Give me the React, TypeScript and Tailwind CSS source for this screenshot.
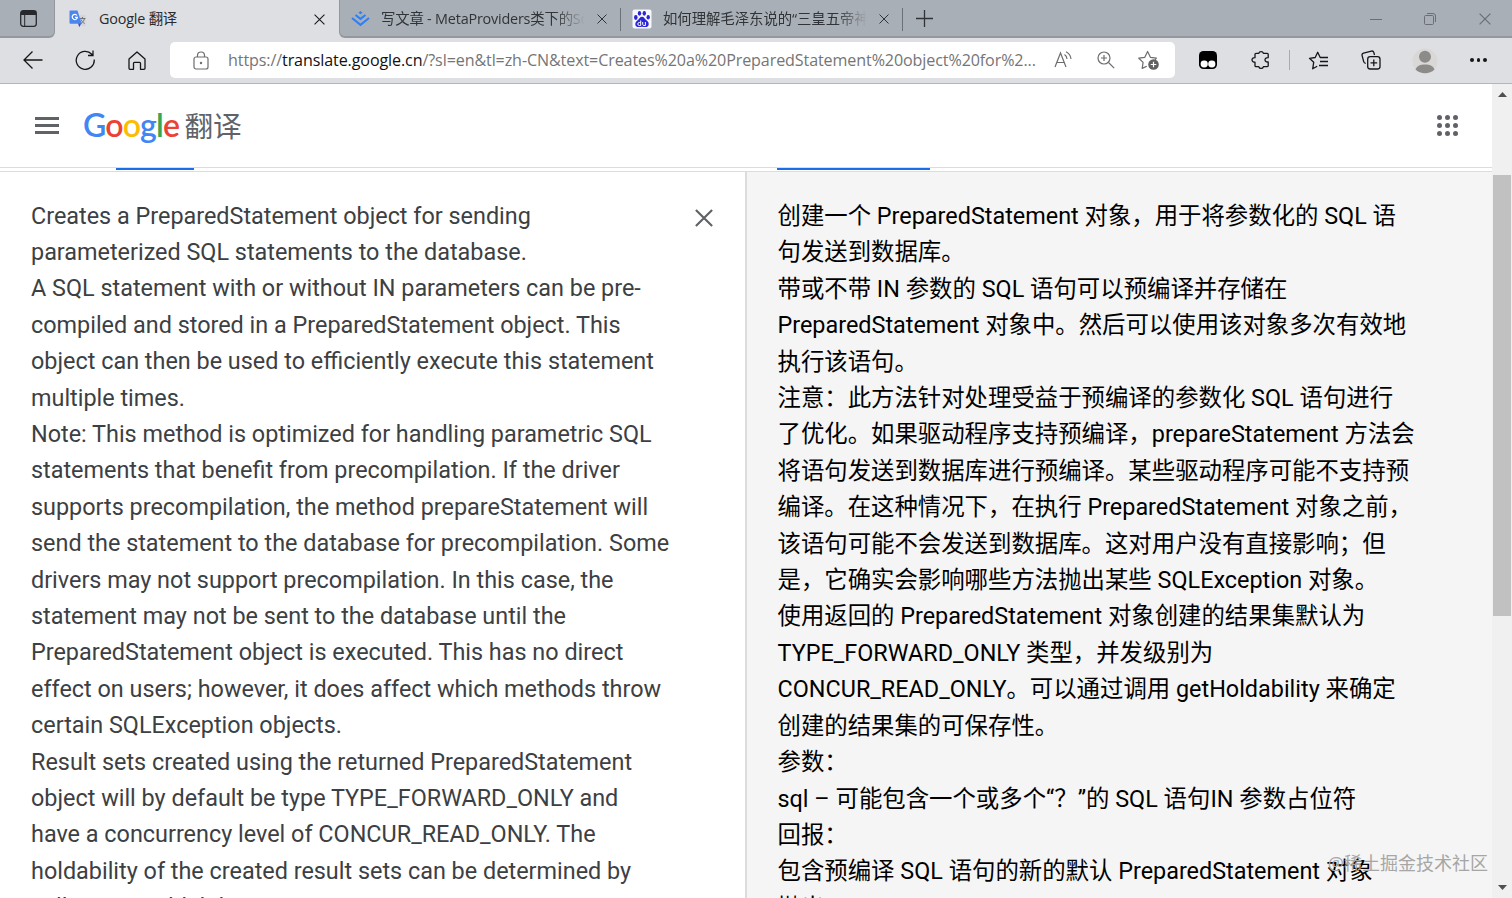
import clsx from "clsx";

const sourceLines = [
  "Creates a PreparedStatement object for sending",
  "parameterized SQL statements to the database.",
  "A SQL statement with or without IN parameters can be pre-",
  "compiled and stored in a PreparedStatement object. This",
  "object can then be used to efficiently execute this statement",
  "multiple times.",
  "Note: This method is optimized for handling parametric SQL",
  "statements that benefit from precompilation. If the driver",
  "supports precompilation, the method prepareStatement will",
  "send the statement to the database for precompilation. Some",
  "drivers may not support precompilation. In this case, the",
  "statement may not be sent to the database until the",
  "PreparedStatement object is executed. This has no direct",
  "effect on users; however, it does affect which methods throw",
  "certain SQLException objects.",
  "Result sets created using the returned PreparedStatement",
  "object will by default be type TYPE_FORWARD_ONLY and",
  "have a concurrency level of CONCUR_READ_ONLY. The",
  "holdability of the created result sets can be determined by",
  "calling getHoldability.",
];

const targetLines = [
  "创建一个 PreparedStatement 对象，用于将参数化的 SQL 语",
  "句发送到数据库。",
  "带或不带 IN 参数的 SQL 语句可以预编译并存储在",
  "PreparedStatement 对象中。然后可以使用该对象多次有效地",
  "执行该语句。",
  "注意：此方法针对处理受益于预编译的参数化 SQL 语句进行",
  "了优化。如果驱动程序支持预编译，prepareStatement 方法会",
  "将语句发送到数据库进行预编译。某些驱动程序可能不支持预",
  "编译。在这种情况下，在执行 PreparedStatement 对象之前，",
  "该语句可能不会发送到数据库。这对用户没有直接影响；但",
  "是，它确实会影响哪些方法抛出某些 SQLException 对象。",
  "使用返回的 PreparedStatement 对象创建的结果集默认为",
  "TYPE_FORWARD_ONLY 类型，并发级别为",
  "CONCUR_READ_ONLY。可以通过调用 getHoldability 来确定",
  "创建的结果集的可保存性。",
  "参数：",
  "sql – 可能包含一个或多个“？”的 SQL 语句IN 参数占位符",
  "回报：",
  "包含预编译 SQL 语句的新的默认 PreparedStatement 对象",
  "抛出：",
];

type LinesProps = {
  lines: string[];
  className?: string;
};

const Lines = ({ lines, className }: LinesProps) => (
  <div
    className={clsx(
      "text-[23.4px] leading-[36.4px] whitespace-nowrap",
      className
    )}
  >
    {lines.map((line) => (
      <p key={line}>{line}</p>
    ))}
  </div>
);

const CloseIcon = ({ className }: { className?: string }) => (
  <svg viewBox="0 0 10 10" className={className} fill="none" stroke="currentColor">
    <path d="M.5.5l9 9M9.5.5l-9 9" />
  </svg>
);

const TranslateIcon = () => (
  <svg width="18" height="18" viewBox="0 0 18 18" className="shrink-0">
    <path d="M8 5h8.500v11H11z" fill="#d3d5d9" />
    <path d="M10.500 8.500h6M13.500 7v1.500M15.500 8.500c-.6 2.500-2 4-3.500 5M12 9.500c.8 2 2 3 3.700 4" stroke="#6f7378" fill="none" />
    <path d="M9 13h3.500l-2.300 4.300z" fill="#3a4fb5" />
    <path d="M1 .5h7.500l4.200 13.300H1.500a1 1 0 0 1-1-1V1z" fill="#4a86ee" />
    <path d="M8 5.500a2.600 2.600 0 1 0 .4 1.900H6" stroke="#fff" strokeWidth="1.200" fill="none" />
  </svg>
);

const JuejinIcon = () => (
  <svg width="19" height="16" viewBox="0 0 19 16" className="shrink-0" fill="none" stroke="#2f7ff2" strokeWidth="2">
    <path d="M9.500 0l2 1.700-2 1.600-2-1.600z" fill="#2f7ff2" stroke="none" />
    <path d="M4.500 4l5 3.900 5-3.900M1 7l8.500 6.900L18 7" />
  </svg>
);

const BaiduIcon = () => (
  <svg width="20" height="20" viewBox="0 0 20 20" className="shrink-0">
    <rect x=".5" y=".5" width="19" height="19" rx="2" fill="#f7f8fd" />
    <g fill="#2a26d8">
      <ellipse cx="3.800" cy="8.500" rx="1.800" ry="2.400" />
      <ellipse cx="7.500" cy="4.300" rx="1.700" ry="2.400" />
      <ellipse cx="12.300" cy="4.300" rx="1.700" ry="2.400" />
      <ellipse cx="16.200" cy="8.200" rx="1.700" ry="2.300" />
      <path d="M10 7.700c2 0 2.400 1.600 3.800 3 1.700 1.500 3.200 2.500 2.900 4.700-.3 2-1.800 2.800-3.600 2.700-1.200-.1-1.900-.4-3.100-.4s-2 .4-3.200.4c-1.800 0-3.300-.9-3.500-2.700-.2-2.100 1.400-3.200 2.900-4.700C7.600 9.300 8 7.700 10 7.700z" />
    </g>
    <path d="M8.700 11.500v5H7.300a1.400 1.400 0 0 1 0-3h1.300M10.700 13v2.300c0 .8.400 1.200 1.100 1.200h1.600V13" stroke="#fff" fill="none" />
  </svg>
);

const TabBar = () => (
  <div className="flex h-[38px] shrink-0 bg-[#dedfe3]">
    <div className="flex w-[55px] items-center rounded-br-[6px] border-r border-b-2 border-[#94989e] bg-[#a9afb6] pt-px pl-5">
      <svg width="17" height="17" viewBox="0 0 17 17" className="text-[#26292d]">
        <rect x=".7" y=".7" width="15.600" height="15.600" rx="2.500" fill="none" stroke="currentColor" strokeWidth="1.300" />
        <path d="M1 1h15v4H1z" fill="currentColor" />
        <path d="M4.700 5v11" stroke="currentColor" />
      </svg>
    </div>
    <div className="flex w-[284px] items-center pr-[14px] pl-[14px]">
      <TranslateIcon />
      <span className="ml-3 flex-1 text-[14.4px] tracking-[-0.2px] text-[#2b2c2e]">
        Google 翻译
      </span>
      <CloseIcon className="mt-px size-[11px] text-[#1b1b1b]" />
    </div>
    <div className="flex flex-1 items-center rounded-bl-[6px] border-b-2 border-l border-[#94989e] bg-[#a9afb6] pt-[2px] pl-[11px] text-[#303438]">
      <JuejinIcon />
      <span className="ml-[11px] w-[204px] overflow-hidden mask-r-from-85% text-[14.4px] tracking-[-0.2px] whitespace-nowrap">
        写文章 - MetaProviders类下的Sql
      </span>
      <CloseIcon className="ml-3 size-[10px]" />
      <span className="ml-[13px] h-[23px] w-px bg-[#6c7177]" />
      <span className="ml-[11px] flex">
        <BaiduIcon />
      </span>
      <span className="ml-[11px] w-[204px] overflow-hidden mask-r-from-85% text-[14.4px] tracking-[-0.05px] whitespace-nowrap">
        如何理解毛泽东说的“三皇五帝神圣
      </span>
      <CloseIcon className="ml-3 size-[10px]" />
      <span className="ml-[13px] h-[23px] w-px bg-[#6c7177]" />
      <svg width="17" height="17" viewBox="0 0 17 17" className="mb-px ml-[13px]" stroke="currentColor" strokeWidth="1.300">
        <path d="M8.500 0v17M0 8.500h17" />
      </svg>
      <div className="ml-auto flex items-center pr-[21px] text-[#6b6f75]">
        <span className="h-px w-3 bg-[#6b6f75]" />
        <svg width="12" height="12" viewBox="0 0 12 12" className="mr-[43px] ml-[42px]" fill="none" stroke="currentColor">
          <rect x=".5" y="2.500" width="9" height="9" rx="1.200" />
          <path d="M3 .5h6a2.500 2.500 0 0 1 2.500 2.500v6" />
        </svg>
        <CloseIcon className="size-3" />
      </div>
    </div>
  </div>
);

const AddressBar = () => (
  <div className="ml-6 flex h-9 w-[1005px] shrink-0 items-center rounded-[5px] bg-white">
    <svg width="16" height="19" viewBox="0 0 16 19" className="ml-[23px]" fill="none" stroke="#6d6d6d" strokeWidth="1.200">
      <rect x="1" y="6" width="14" height="12" rx="2" />
      <path d="M4.500 6V4.500a3.500 3.500 0 0 1 7 0V6" />
      <circle cx="8" cy="12" r="1.200" fill="#6d6d6d" stroke="none" />
    </svg>
    <span className="mt-px ml-[19px] w-[808px] text-[16.1px] tracking-[-0.11px] whitespace-nowrap text-[#757575]">
      https://<span className="text-[#111]">translate.google.cn</span>
      /?sl=en&amp;tl=zh-CN&amp;text=Creates%20a%20PreparedStatement%20object%20for%2...
    </span>
    <svg width="19" height="18" viewBox="0 0 19 18" className="ml-[18px]" fill="none" stroke="#6d6d6d" strokeWidth="1.200">
      <path d="M1 16L6.500 2 12 16M3 11.500h7M10.500 3.500c1.600 1 2.400 2.400 2.500 4.500M12 .8c3 1.500 4.700 4 5 7.200" />
    </svg>
    <svg width="18" height="18" viewBox="0 0 18 18" className="ml-[24px]" fill="none" stroke="#6d6d6d" strokeWidth="1.200">
      <circle cx="7" cy="7" r="6" />
      <path d="M11.500 11.500l5.700 5.700M7 4v6M4 7h6" />
    </svg>
    <svg width="22" height="22" viewBox="0 0 22 22" className="ml-[23px]" fill="none" stroke="#6d6d6d" strokeWidth="1.200">
      <path d="M8.800 17.200l-4.600 2.200.9-6-4.300-4.200 6-.9L9.600 2.500l2.800 5.800 6 .9-1.500 1.600" strokeLinejoin="round" />
      <circle cx="15.500" cy="15.500" r="5.300" fill="#616161" stroke="none" />
      <path d="M15.500 12.700v5.600M12.700 15.500h5.600" stroke="#fff" />
    </svg>
  </div>
);

const Toolbar = () => (
  <div className="flex h-[46px] shrink-0 items-center border-b border-[#b4b5b8] bg-[#dedfe3] pb-px text-[#161616]">
    <svg width="20" height="18" viewBox="0 0 20 18" className="ml-[23px]" fill="none" stroke="currentColor" strokeWidth="1.300">
      <path d="M9.500.5L1 9l8.500 8.500M1 9h18.500" />
    </svg>
    <svg width="20" height="20" viewBox="0 0 20 20" className="ml-[32px]" fill="none" stroke="currentColor" strokeWidth="1.300">
      <path d="M19.200 9.500A9 9 0 1 1 16.800 4.200L17.800 5.300M18 .5v5h-5" />
    </svg>
    <svg width="18" height="19" viewBox="0 0 18 19" className="ml-[33px]" fill="none" stroke="currentColor" strokeWidth="1.300" strokeLinejoin="round">
      <path d="M1 8l8-7 8 7v9.300a1 1 0 0 1-1 1h-3.500v-6a1 1 0 0 0-1-1h-5a1 1 0 0 0-1 1v6H2a1 1 0 0 1-1-1z" />
    </svg>
    <AddressBar />
    <svg width="18" height="18" viewBox="0 0 18 18" className="ml-6">
      <rect width="18" height="18" rx="4.500" fill="#000" />
      <rect x="1.600" y="9.500" width="7.200" height="7" rx="3.400" fill="#fff" />
      <rect x="9.200" y="9.500" width="7.200" height="7" rx="3.400" fill="#fff" />
    </svg>
    <svg width="19" height="20" viewBox="0 0 19 20" className="ml-[34px]" fill="none" stroke="currentColor" strokeWidth="1.300" strokeLinejoin="round">
      <path d="M5 3.300h2.800a2.400 2.400 0 0 1 4.600 0h3.800a1 1 0 0 1 1 1v3.400c-4.300-.4-4.300 4.700 0 4.300v3.700a1 1 0 0 1-1 1h-3.800a2.400 2.400 0 0 1-4.600 0H5a1 1 0 0 1-1-1v-3.500c-4 .2-4-4.900 0-4.600V4.300a1 1 0 0 1 1-1z" />
    </svg>
    <span className="ml-[19px] h-5 w-px bg-[#aaabae]" />
    <svg width="21" height="19" viewBox="0 0 21 19" className="ml-[18px]" fill="none" stroke="currentColor" strokeWidth="1.300" strokeLinejoin="round">
      <path d="M14 6.500h-1.800L9.700 1.300 7.200 6.500l-5.700.8 4.200 4-1 6.500 4.500-2.600M13.500 6.500H20M12 10.500h8M11 14.500h9" />
    </svg>
    <svg width="20" height="20" viewBox="0 0 20 20" className="ml-[32px]" fill="none" stroke="currentColor" strokeWidth="1.300">
      <rect x="6.700" y="6.700" width="12.300" height="12.300" rx="2.500" />
      <path d="M12.800 9.500v6.800M9.500 12.900h6.700M13.500 5l-.7-2.600a2 2 0 0 0-2.400-1.300L2.500 3.200A2 2 0 0 0 1.100 5.600l1.600 6a2.300 2.300 0 0 0 2.100 1.700" />
    </svg>
    <svg width="26" height="26" viewBox="0 0 26 26" className="mt-px ml-[31px]">
      <circle cx="13" cy="13" r="12.500" fill="#d9d8d7" />
      <circle cx="13" cy="8.700" r="6" fill="#8d8b8a" />
      <path d="M3.500 21.500c1.500-4 5-5 9.500-5s8 1 9.500 5c-5 5-14 5-19 0z" fill="#8d8b8a" />
    </svg>
    <span className="ml-[32px] flex gap-[3px]">
      <i className="size-[3.500px] rounded-full bg-[#161616]" />
      <i className="size-[3.500px] rounded-full bg-[#161616]" />
      <i className="size-[3.500px] rounded-full bg-[#161616]" />
    </span>
  </div>
);

const logo = [
  { letter: "G", color: "text-[#4285f4]" },
  { letter: "o", color: "text-[#ea4335]" },
  { letter: "o", color: "text-[#fbbc05]" },
  { letter: "g", color: "text-[#4285f4]" },
  { letter: "l", color: "text-[#34a853]" },
  { letter: "e", color: "text-[#ea4335]" },
];

const Header = () => (
  <header className="flex h-[84px] shrink-0 items-center border-b border-[#dcdcdc] bg-white">
    <div className="ml-[35px] flex flex-col gap-[4.500px]">
      <span className="h-[2.500px] w-6 bg-[#5f6368]" />
      <span className="h-[2.500px] w-6 bg-[#5f6368]" />
      <span className="h-[2.500px] w-6 bg-[#5f6368]" />
    </div>
    <h1 className="mb-px ml-6 flex items-baseline">
      <span className="w-[101.500px] font-[Lato] text-[32px] leading-[40px] font-semibold tracking-[-0.85px]">
        {logo.map(({ letter, color }, i) => (
          <span key={i} className={color}>
            {letter}
          </span>
        ))}
      </span>
      <span className="text-[28.600px] leading-[40px] text-[#5f6368]">翻译</span>
    </h1>
    <div className="mr-[34px] ml-auto grid grid-cols-3 gap-[2.500px]">
      {Array.from({ length: 9 }, (_, i) => (
        <span key={i} className="size-[5.500px] rounded-full bg-[#5f6368]" />
      ))}
    </div>
  </header>
);

const Scrollbar = () => (
  <div className="flex w-5 shrink-0 flex-col items-center bg-[#f0f0f0] pt-[8px] pb-[8px]">
    <svg width="9" height="5" viewBox="0 0 9 5">
      <path d="M0 5l4.500-5L9 5z" fill="#505050" />
    </svg>
    <span className="mt-[78px] h-[441px] w-[18px] bg-[#c1c1c1]" />
    <svg width="9" height="5" viewBox="0 0 9 5" className="mt-auto">
      <path d="M0 0l4.500 5L9 0z" fill="#505050" />
    </svg>
  </div>
);

export default function App() {
  return (
    <div className="relative flex h-[898px] w-[1512px] flex-col overflow-hidden bg-white font-['Open_Sans','Noto_Sans_CJK_SC',sans-serif]">
      <TabBar />
      <Toolbar />
      <div className="flex min-h-0 flex-1">
        <div className="flex min-w-0 flex-1 flex-col">
          <Header />
          <div className="flex h-1 shrink-0 items-start border-b border-[#dcdcdc]">
            <span className="ml-[116px] h-[2px] w-[78px] bg-[#1a6fe8]" />
            <span className="ml-[583px] h-[2px] w-[153px] bg-[#1a6fe8]" />
          </div>
          <main className="flex min-h-0 flex-1 overflow-hidden font-[Roboto,'Noto_Sans_CJK_SC',sans-serif]">
            <section className="flex w-[745px] shrink-0 justify-between pl-[31px]">
              <Lines lines={sourceLines} className="pt-[25.500px] text-[#3c4043]" />
              <CloseIcon className="mt-[37px] mr-[32px] size-[18px] stroke-[1.200] text-[#5f6368]" />
            </section>
            <section className="flex-1 border-l-2 border-[#dcdcdc] bg-[#f5f5f5] pl-[30.500px]">
              <Lines lines={targetLines} className="pt-[26px] text-black" />
            </section>
          </main>
        </div>
        <Scrollbar />
      </div>
      <span className="absolute right-[24px] bottom-[22px] text-[18px] leading-[26px] text-[#a6a6a6]">
        @稀土掘金技术社区
      </span>
    </div>
  );
}
